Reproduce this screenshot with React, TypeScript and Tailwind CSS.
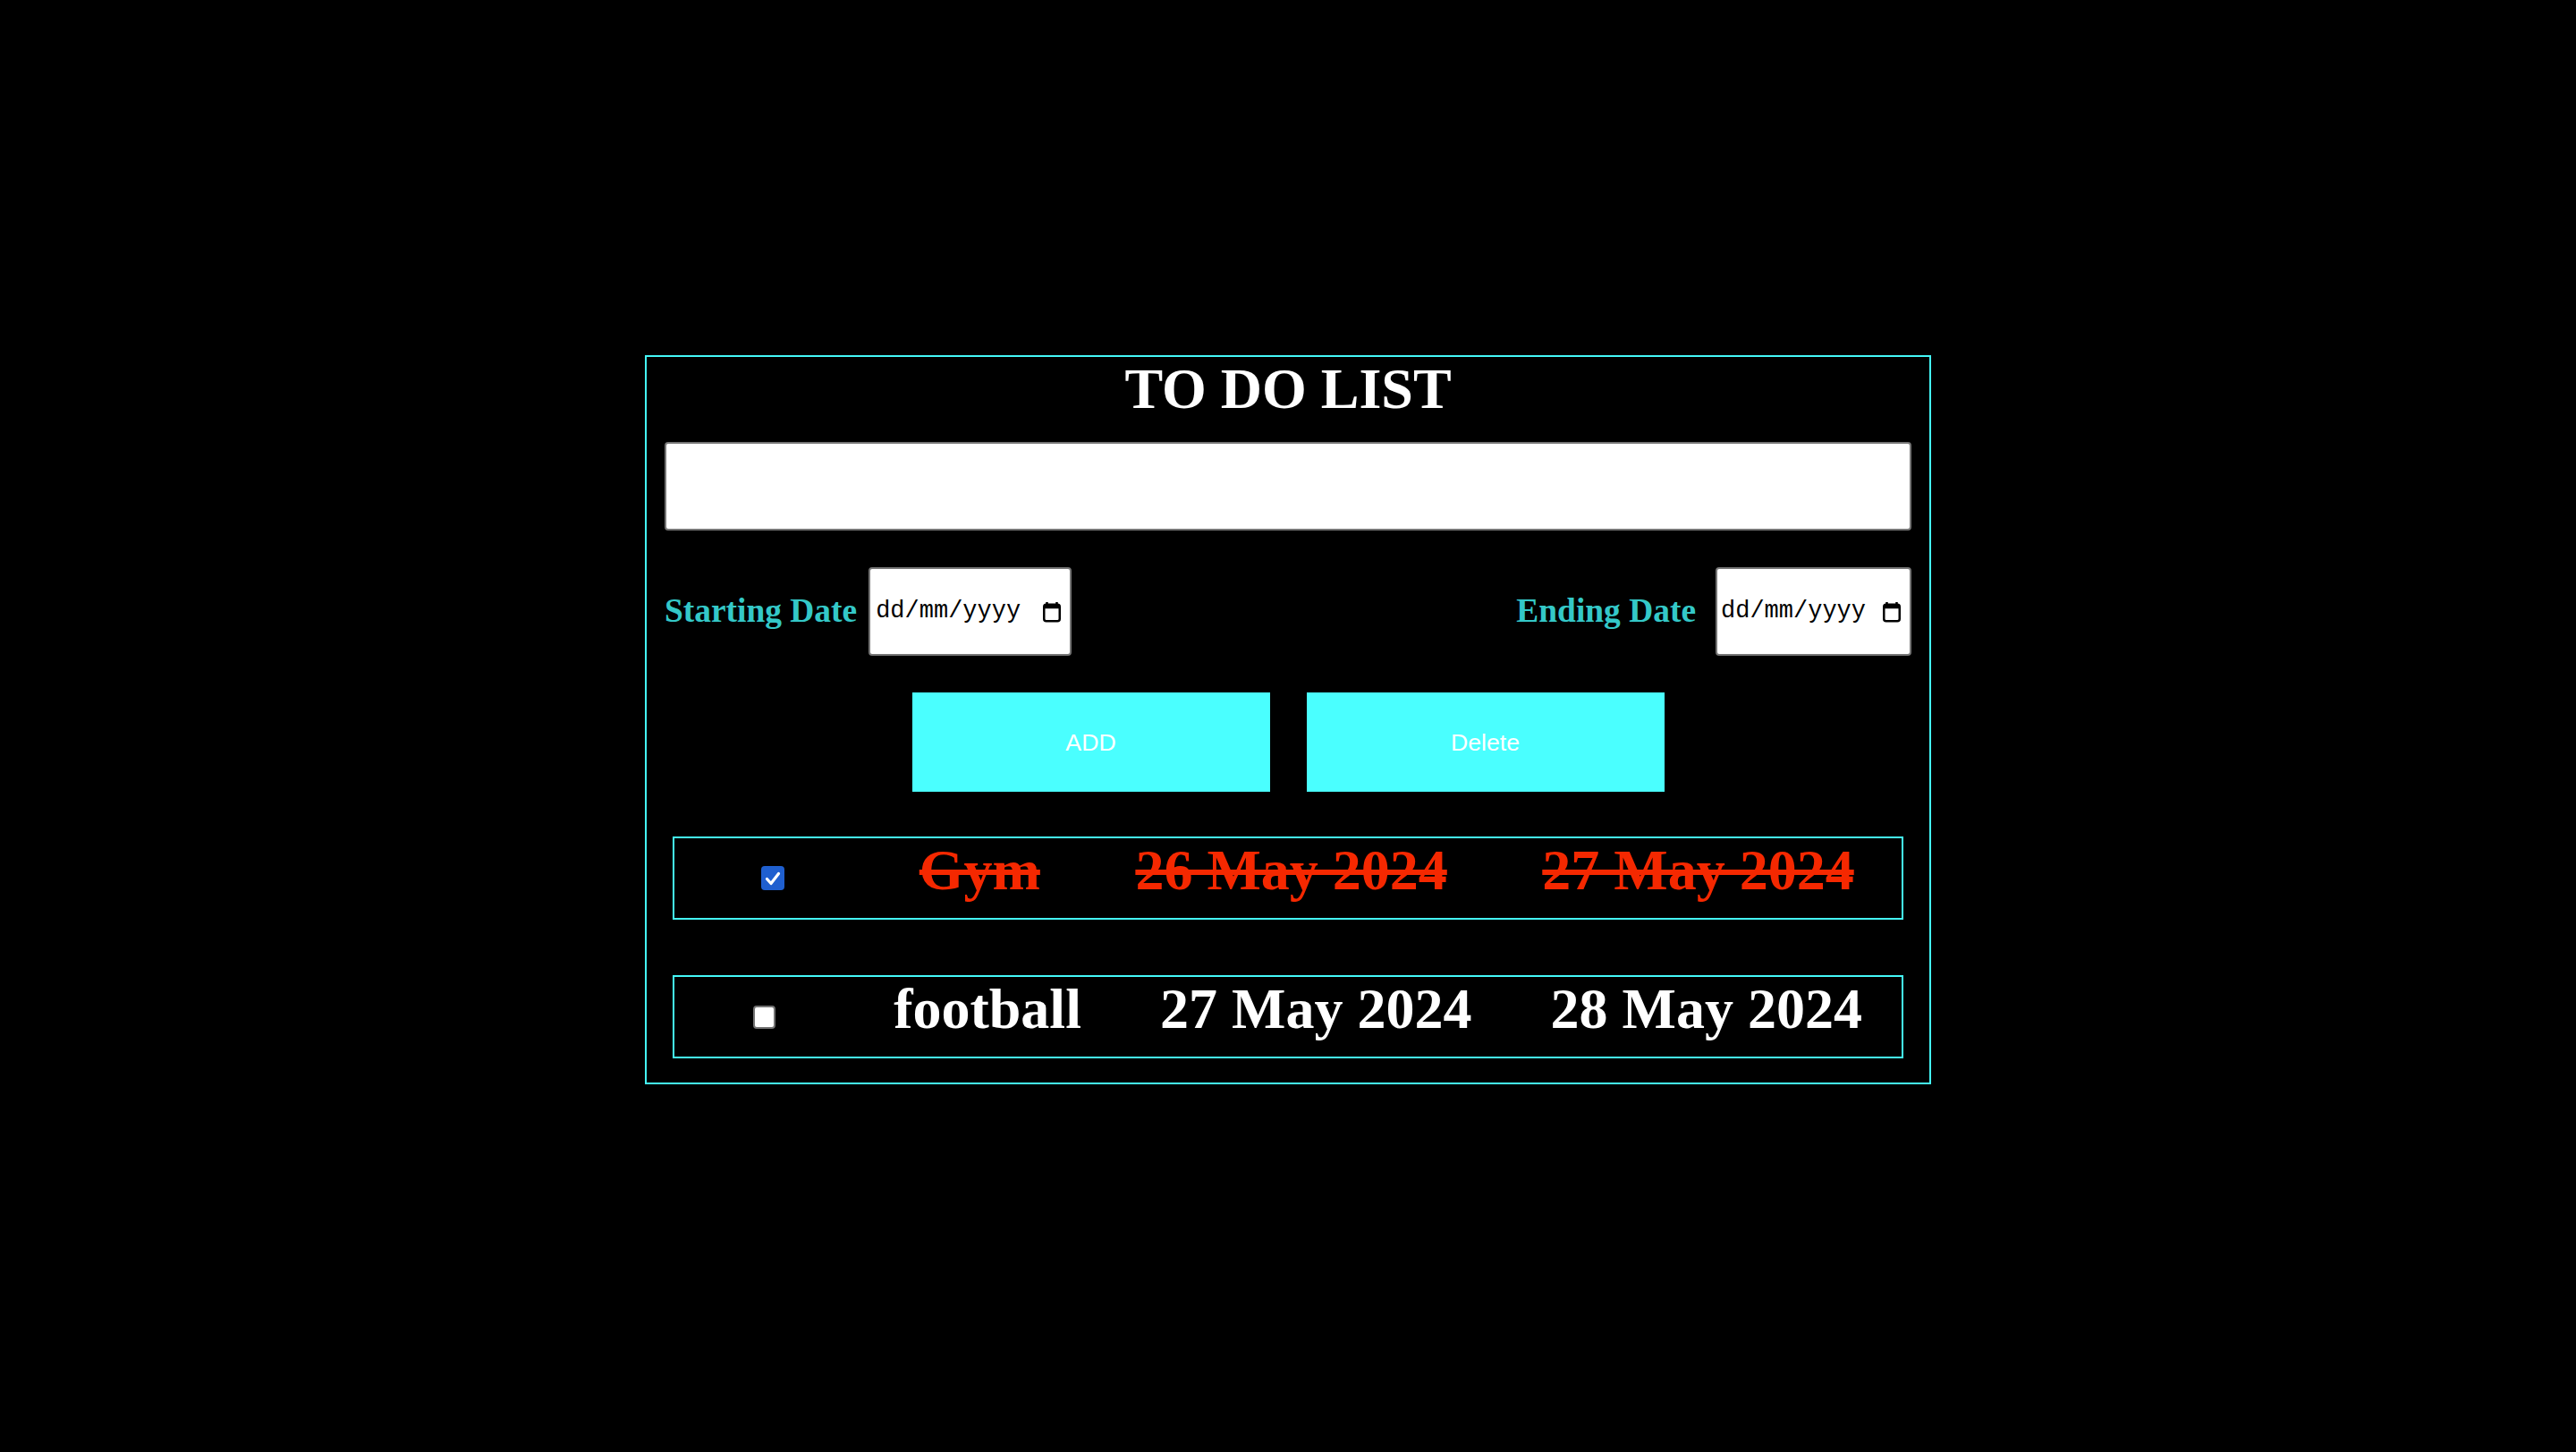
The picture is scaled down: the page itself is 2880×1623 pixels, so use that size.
import { ReactElement } from 'react'

const serif = "font-['Liberation_Serif','Times_New_Roman',serif]"

type Task = { title: string; start: string; end: string; done: boolean }

const tasks: Task[] = [
  { title: 'Gym', start: '26 May 2024', end: '27 May 2024', done: true },
  { title: 'football', start: '27 May 2024', end: '28 May 2024', done: false },
]

function CalendarIcon() {
  return (
    <svg width="20" height="24" viewBox="0 0 20 24" aria-hidden="true">
      <path d="M4.5 1v4M15.5 1v4" stroke="#000" strokeWidth="2.5" />
      <rect x="1.25" y="3.75" width="17.5" height="18.5" rx="2.5" fill="none" stroke="#000" strokeWidth="2.5" />
      <rect x="1.25" y="3.75" width="17.5" height="4.5" fill="#000" />
    </svg>
  )
}

function DateBox({ width, padLeft }: { width: string; padLeft: string }) {
  return (
    <div
      className={`${width} ${padLeft} h-[99px] shrink-0 flex items-center justify-between pr-[10px] bg-white border-2 border-[#767676] rounded-[4px]`}
    >
      <span className="font-['Liberation_Mono','DejaVu_Sans_Mono',monospace] text-[27px] text-black leading-none">
        dd/mm/yyyy
      </span>
      <CalendarIcon />
    </div>
  )
}

function CheckBox({ checked }: { checked: boolean }) {
  return checked ? (
    <span className="mx-[44px] self-center w-[26px] h-[27px] rounded-[4px] bg-[#1f5fcf] flex items-center justify-center shrink-0">
      <svg width="18" height="16" viewBox="0 0 18 16" aria-hidden="true">
        <path d="M2.5 8.5l4.5 5L15.5 2.5" fill="none" stroke="#fff" strokeWidth="3.2" strokeLinecap="round" strokeLinejoin="round" />
      </svg>
    </span>
  ) : (
    <span className="mx-[44px] self-center w-[25px] h-[26px] rounded-[4px] bg-white border-2 border-[#737373] shrink-0" />
  )
}

function TaskRow({ task }: { task: Task }) {
  const text = task.done ? 'text-[#f52800] line-through' : 'text-white'
  return (
    <div className="mx-[9px] h-[93px] border-2 border-[#44f8f8] flex items-start justify-around">
      <CheckBox checked={task.done} />
      <span className={`${serif} ${text} font-bold text-[64px] leading-[71px] whitespace-nowrap`}>{task.title}</span>
      <span className={`${serif} ${text} font-bold text-[64px] leading-[71px] whitespace-nowrap`}>{task.start}</span>
      <span className={`${serif} ${text} font-bold text-[64px] leading-[71px] whitespace-nowrap`}>{task.end}</span>
    </div>
  )
}

export default function App(): ReactElement {
  return (
    <div className="min-h-screen bg-black pt-[397px]">
      <div className="mx-auto w-[1438px] h-[815px] border-2 border-[#44f8f8] px-[20px]">
        <h1 className={`${serif} text-white font-bold text-[64px] leading-[71px] text-center`}>TO DO LIST</h1>

        <input
          type="text"
          className="mt-[24px] block w-full h-[99px] bg-white border-2 border-[#767676] rounded-[4px] outline-none"
        />

        <div className="mt-[41px] flex items-center justify-between">
          <div className="flex items-center gap-[13px]">
            <span className={`${serif} text-[#34c8c8] font-bold text-[37.44px]`}>Starting Date</span>
            <DateBox width="w-[227px]" padLeft="pl-[6px]" />
          </div>
          <div className="flex items-center gap-[22px]">
            <span className={`${serif} text-[#34c8c8] font-bold text-[37.44px]`}>Ending Date</span>
            <DateBox width="w-[219px]" padLeft="pl-[4px]" />
          </div>
        </div>

        <div className="mt-[41px] flex justify-center gap-[41px]">
          <button className="w-[400px] h-[111px] bg-[#4affff] text-white font-['Liberation_Sans',Arial,sans-serif] text-[26.67px]">
            ADD
          </button>
          <button className="w-[400px] h-[111px] bg-[#4affff] text-white font-['Liberation_Sans',Arial,sans-serif] text-[26.67px]">
            Delete
          </button>
        </div>

        <div className="mt-[50px] flex flex-col gap-[62px]">
          {tasks.map((t) => (
            <TaskRow key={t.title} task={t} />
          ))}
        </div>
      </div>
    </div>
  )
}
